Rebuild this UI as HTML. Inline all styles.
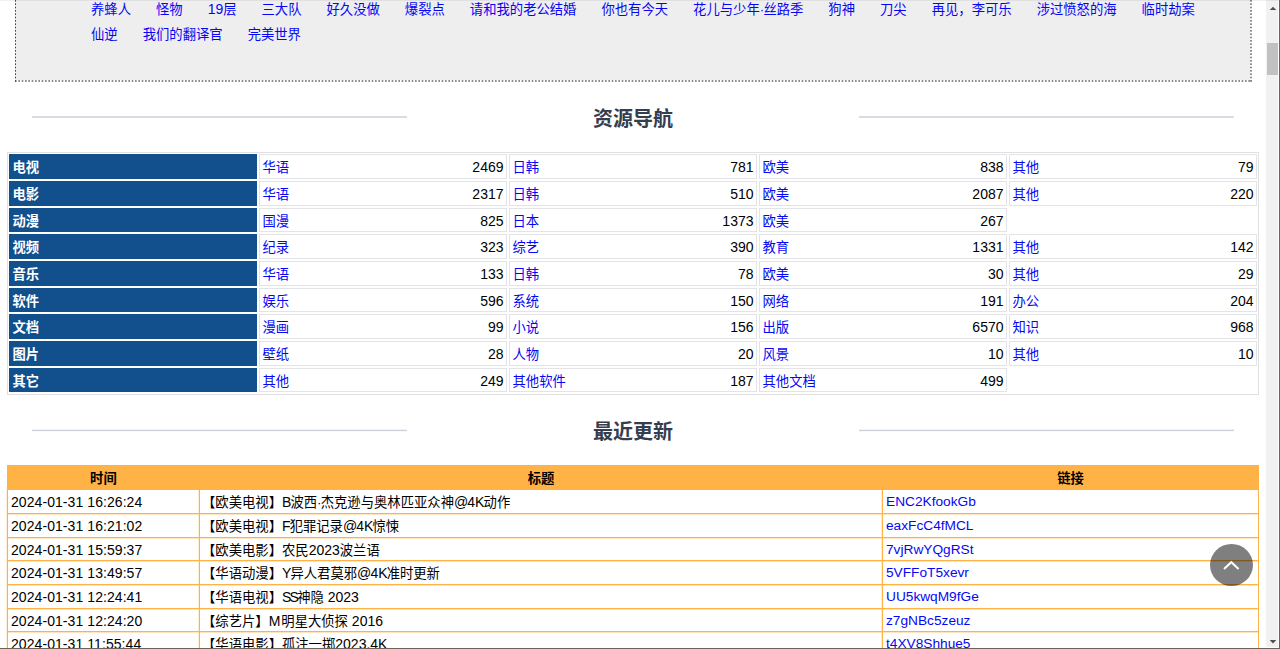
<!DOCTYPE html>
<html lang="zh-CN"><head><meta charset="utf-8"><title>资源导航</title>
<style>
html,body{margin:0;padding:0;}
body{width:1280px;height:649px;overflow:hidden;position:relative;background:#fff;
 font-family:"Liberation Sans","Noto Sans CJK SC",sans-serif;font-size:13.33px;color:#000;}
a{color:#0606f6;text-decoration:none;}
.d{letter-spacing:-.8px;}
.l{font-size:14px;}
.k{font-size:13.7px;}
.u{letter-spacing:-.9px;}
.us{letter-spacing:-1.75px;}
.um{letter-spacing:1px;}
#view{position:absolute;left:0;top:0;width:1266px;height:649px;overflow:hidden;}
#hot{position:absolute;left:15px;top:-60px;width:1237px;height:142px;background:
 repeating-linear-gradient(to right,rgba(70,72,80,0.62) 0px,rgba(70,72,80,0.62) 1px,rgba(70,72,80,0.42) 1px,rgba(70,72,80,0.42) 2px,rgba(70,72,80,0.00) 2px,rgba(70,72,80,0.00) 3px,rgba(70,72,80,0.42) 3px,rgba(70,72,80,0.42) 4px,rgba(70,72,80,0.62) 4px,rgba(70,72,80,0.62) 5px,rgba(70,72,80,0.00) 5px,rgba(70,72,80,0.00) 6px,rgba(70,72,80,0.20) 6px,rgba(70,72,80,0.20) 7px,rgba(70,72,80,0.62) 7px,rgba(70,72,80,0.62) 8px,rgba(70,72,80,0.20) 8px,rgba(70,72,80,0.20) 9px,rgba(70,72,80,0.00) 9px,rgba(70,72,80,0.00) 10px) left bottom/100% 2px no-repeat,
 repeating-linear-gradient(to bottom,rgba(60,63,72,0.95) 0px,rgba(60,63,72,0.95) 1px,rgba(60,63,72,0.64) 1px,rgba(60,63,72,0.64) 2px,rgba(60,63,72,0.00) 2px,rgba(60,63,72,0.00) 3px,rgba(60,63,72,0.64) 3px,rgba(60,63,72,0.64) 4px,rgba(60,63,72,0.95) 4px,rgba(60,63,72,0.95) 5px,rgba(60,63,72,0.00) 5px,rgba(60,63,72,0.00) 6px,rgba(60,63,72,0.31) 6px,rgba(60,63,72,0.31) 7px,rgba(60,63,72,0.95) 7px,rgba(60,63,72,0.95) 8px,rgba(60,63,72,0.31) 8px,rgba(60,63,72,0.31) 9px,rgba(60,63,72,0.00) 9px,rgba(60,63,72,0.00) 10px) left top/1px 100% no-repeat,
 repeating-linear-gradient(to bottom,rgba(70,72,80,0.62) 0px,rgba(70,72,80,0.62) 1px,rgba(70,72,80,0.42) 1px,rgba(70,72,80,0.42) 2px,rgba(70,72,80,0.00) 2px,rgba(70,72,80,0.00) 3px,rgba(70,72,80,0.42) 3px,rgba(70,72,80,0.42) 4px,rgba(70,72,80,0.62) 4px,rgba(70,72,80,0.62) 5px,rgba(70,72,80,0.00) 5px,rgba(70,72,80,0.00) 6px,rgba(70,72,80,0.20) 6px,rgba(70,72,80,0.20) 7px,rgba(70,72,80,0.62) 7px,rgba(70,72,80,0.62) 8px,rgba(70,72,80,0.20) 8px,rgba(70,72,80,0.20) 9px,rgba(70,72,80,0.00) 9px,rgba(70,72,80,0.00) 10px) right top/2px 100% no-repeat,
 linear-gradient(#eee,#eee) left top/1235px 140px no-repeat;}
#hot .row{position:absolute;left:76px;white-space:nowrap;height:25px;line-height:25px;}
#hot .row a{margin-right:25px;display:inline-block;}
.hd{position:absolute;left:8px;width:1250px;height:40px;text-align:center;font-size:20px;font-weight:bold;color:#353d4f;line-height:42px;}
.hd i{position:absolute;top:18px;height:2px;width:375px;background:#d9dde3;}
.hd.h2 i{top:18px;height:3px;background:linear-gradient(rgba(204,209,220,.3) 0,rgba(204,209,220,.3) 1px,#ccd1dc 1px,#ccd1dc 2px,rgba(204,209,220,.15) 2px,rgba(204,209,220,.15) 3px);}
.hd i.a{left:24px;} .hd i.b{right:24px;}
#nav{position:absolute;left:7px;top:152px;width:1250px;height:241px;border:1px solid #e0e0e2;}
#nav .r{position:absolute;left:0;width:1250px;height:24.5px;}
#nav .c{position:absolute;top:0;height:22.5px;border:1px solid #e3e4e7;line-height:25px;box-sizing:content-box;}
#nav .h{position:absolute;top:0;left:1px;width:248px;height:24.5px;background:#114f8d;color:#fff;font-weight:bold;line-height:27px;}
#nav .h span{padding-left:3.5px;}
#nav .c a{position:absolute;left:2.5px;}
#nav .e{border-color:transparent !important;}
#nav .c b{position:absolute;right:2.5px;top:0;font-weight:normal;font-size:14px;}
#rec{position:absolute;left:7px;top:465px;width:1252px;}
#rec .r{position:absolute;left:0;width:1252px;}
#rec .r div{position:absolute;top:0;height:100%;box-sizing:border-box;border-left:1px solid #ffb347;border-bottom:1px solid #ffb347;white-space:nowrap;}
#rec .r .c1{left:0;width:192px;padding-left:3px;letter-spacing:.07px;}
#rec .r .c2{left:192px;width:683px;padding-left:2px;}
#rec .r .c3{left:875px;width:377px;border-right:1px solid #ffb347;padding-left:3px;}
#rec .r:not(.th) div{box-shadow:0 1px 0 rgba(255,179,71,.35),-1px 0 0 rgba(255,179,71,.25);}
#rec .th{background:#ffb347;font-weight:bold;text-align:center;}
#rec .th div{border-color:#ffb347;padding-left:0 !important;}
#totop{position:absolute;left:1210px;top:543.8px;width:42.7px;height:42px;border-radius:50%;background:rgba(0,0,0,.5);}
#totop svg{position:absolute;left:0;top:0;}
#sb{position:absolute;left:1266px;top:0;width:12px;height:647px;background:#f1f1f1;}
#sb .t{position:absolute;left:1px;top:43px;width:11px;height:32px;background:#c1c1c1;}
#edge-r{position:absolute;left:1279px;top:0;width:1px;height:649px;background:#6f6256;}
#edge-t{position:absolute;left:0;top:0;width:1279px;height:1px;background:rgba(0,0,0,.06);}
#edge-b{position:absolute;left:0;top:648px;width:1280px;height:1px;background:#6f6256;}
</style></head>
<body>
<div id="view">
<div id="hot">
<div class="row" style="top:57px"><a>养蜂人</a><a>怪物</a><a><span class="l">19</span>层</a><a>三大队</a><a>好久没做</a><a>爆裂点</a><a>请和我的老公结婚</a><a>你也有今天</a><a>花儿与少年<span class="d">·</span>丝路季</a><a>狗神</a><a>刀尖</a><a>再见，李可乐</a><a>涉过愤怒的海</a><a>临时劫案</a></div>
<div class="row" style="top:82px"><a>仙逆</a><a>我们的翻译官</a><a>完美世界</a></div>
</div>
<div class="hd" style="top:98px"><i class="a"></i>资源导航<i class="b"></i></div>
<div id="nav">
<div class="r" style="top:1.33px"><div class="h"><span>电视</span></div><div class="c" style="left:251px;width:246px"><a>华语</a><b>2469</b></div><div class="c" style="left:501px;width:246px"><a>日韩</a><b>781</b></div><div class="c" style="left:751px;width:246px"><a>欧美</a><b>838</b></div><div class="c" style="left:1001px;width:246px"><a>其他</a><b>79</b></div></div>
<div class="r" style="top:28.00px"><div class="h"><span>电影</span></div><div class="c" style="left:251px;width:246px"><a>华语</a><b>2317</b></div><div class="c" style="left:501px;width:246px"><a>日韩</a><b>510</b></div><div class="c" style="left:751px;width:246px"><a>欧美</a><b>2087</b></div><div class="c" style="left:1001px;width:246px"><a>其他</a><b>220</b></div></div>
<div class="r" style="top:54.66px"><div class="h"><span>动漫</span></div><div class="c" style="left:251px;width:246px"><a>国漫</a><b>825</b></div><div class="c" style="left:501px;width:246px"><a>日本</a><b>1373</b></div><div class="c" style="left:751px;width:246px"><a>欧美</a><b>267</b></div><div class="c e" style="left:1001px;width:246px"></div></div>
<div class="r" style="top:81.33px"><div class="h"><span>视频</span></div><div class="c" style="left:251px;width:246px"><a>纪录</a><b>323</b></div><div class="c" style="left:501px;width:246px"><a>综艺</a><b>390</b></div><div class="c" style="left:751px;width:246px"><a>教育</a><b>1331</b></div><div class="c" style="left:1001px;width:246px"><a>其他</a><b>142</b></div></div>
<div class="r" style="top:108.00px"><div class="h"><span>音乐</span></div><div class="c" style="left:251px;width:246px"><a>华语</a><b>133</b></div><div class="c" style="left:501px;width:246px"><a>日韩</a><b>78</b></div><div class="c" style="left:751px;width:246px"><a>欧美</a><b>30</b></div><div class="c" style="left:1001px;width:246px"><a>其他</a><b>29</b></div></div>
<div class="r" style="top:134.67px"><div class="h"><span>软件</span></div><div class="c" style="left:251px;width:246px"><a>娱乐</a><b>596</b></div><div class="c" style="left:501px;width:246px"><a>系统</a><b>150</b></div><div class="c" style="left:751px;width:246px"><a>网络</a><b>191</b></div><div class="c" style="left:1001px;width:246px"><a>办公</a><b>204</b></div></div>
<div class="r" style="top:161.33px"><div class="h"><span>文档</span></div><div class="c" style="left:251px;width:246px"><a>漫画</a><b>99</b></div><div class="c" style="left:501px;width:246px"><a>小说</a><b>156</b></div><div class="c" style="left:751px;width:246px"><a>出版</a><b>6570</b></div><div class="c" style="left:1001px;width:246px"><a>知识</a><b>968</b></div></div>
<div class="r" style="top:188.00px"><div class="h"><span>图片</span></div><div class="c" style="left:251px;width:246px"><a>壁纸</a><b>28</b></div><div class="c" style="left:501px;width:246px"><a>人物</a><b>20</b></div><div class="c" style="left:751px;width:246px"><a>风景</a><b>10</b></div><div class="c" style="left:1001px;width:246px"><a>其他</a><b>10</b></div></div>
<div class="r" style="top:214.67px"><div class="h"><span>其它</span></div><div class="c" style="left:251px;width:246px"><a>其他</a><b>249</b></div><div class="c" style="left:501px;width:246px"><a>其他软件</a><b>187</b></div><div class="c" style="left:751px;width:246px"><a>其他文档</a><b>499</b></div><div class="c e" style="left:1001px;width:246px"></div></div>
</div>
<div class="hd h2" style="top:411px"><i class="a"></i>最近更新<i class="b"></i></div>
<div id="rec">
<div class="r th" style="top:0;height:25.4px;line-height:27px"><div class="c1">时间</div><div class="c2">标题</div><div class="c3">链接</div></div>
<div class="r" style="top:25.40px;height:23.67px;line-height:24px"><div class="c1"><span class="l">2024-01-31 16:26:24</span></div><div class="c2">【欧美电视】<span class="l"><span class="u">B</span></span>波西<span class="d">·</span>杰克逊与奥林匹亚众神<span class="l"><span class="u">@</span>4<span class="u">K</span></span>动作</div><div class="c3"><a class="k">ENC2KfookGb</a></div></div>
<div class="r" style="top:49.07px;height:23.67px;line-height:24px"><div class="c1"><span class="l">2024-01-31 16:21:02</span></div><div class="c2">【欧美电视】<span class="l"><span class="u">F</span></span>犯罪记录<span class="l"><span class="u">@</span>4<span class="u">K</span></span>惊悚</div><div class="c3"><a class="k">eaxFcC4fMCL</a></div></div>
<div class="r" style="top:72.74px;height:23.67px;line-height:24px"><div class="c1"><span class="l">2024-01-31 15:59:37</span></div><div class="c2">【欧美电影】农民<span class="l">2023</span>波兰语</div><div class="c3"><a class="k">7vjRwYQgRSt</a></div></div>
<div class="r" style="top:96.41px;height:23.67px;line-height:24px"><div class="c1"><span class="l">2024-01-31 13:49:57</span></div><div class="c2">【华语动漫】<span class="l"><span class="u">Y</span></span>异人君莫邪<span class="l"><span class="u">@</span>4<span class="u">K</span></span>准时更新</div><div class="c3"><a class="k">5VFFoT5xevr</a></div></div>
<div class="r" style="top:120.08px;height:23.67px;line-height:24px"><div class="c1"><span class="l">2024-01-31 12:24:41</span></div><div class="c2">【华语电视】<span class="l"><span class="us">SS</span></span>神隐<span class="l"> 2023</span></div><div class="c3"><a class="k">UU5kwqM9fGe</a></div></div>
<div class="r" style="top:143.75px;height:23.67px;line-height:24px"><div class="c1"><span class="l">2024-01-31 12:24:20</span></div><div class="c2">【综艺片】<span class="l"><span class="um">M</span></span>明星大侦探<span class="l"> 2016</span></div><div class="c3"><a class="k">z7gNBc5zeuz</a></div></div>
<div class="r" style="top:167.42px;height:23.67px;line-height:24px"><div class="c1"><span class="l">2024-01-31 11:55:44</span></div><div class="c2">【华语电影】孤注一掷<span class="l">2023.4<span class="u">K</span></span></div><div class="c3"><a class="k">t4XV8Shhue5</a></div></div>
</div>
<div id="totop"><svg width="42" height="42" viewBox="0 0 42 42"><path d="M14 25 L21.3 18.2 L28.6 25" fill="none" stroke="#fff" stroke-width="2"/></svg></div>
</div>
<div id="sb"><div class="t"></div><svg width="13" height="649" style="position:absolute;left:0;top:0"><path d="M3.7 10.1 L7 6.7 L10.3 10.1 Z" fill="#505050"/><path d="M3.7 640.1 L7 643.4 L10.3 640.1 Z" fill="#505050"/></svg></div>
<div id="edge-t"></div><div id="edge-r"></div><div id="edge-b"></div>
</body></html>
